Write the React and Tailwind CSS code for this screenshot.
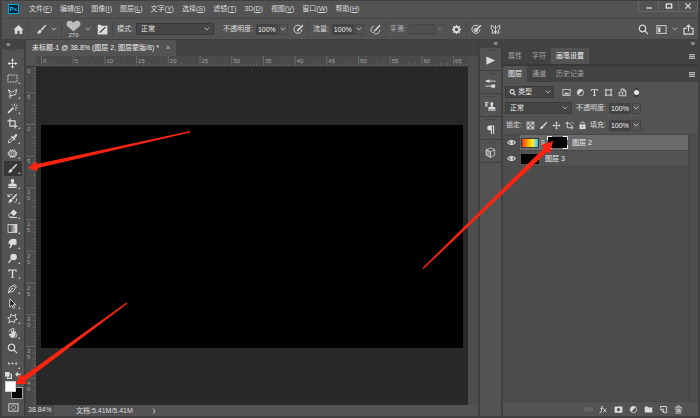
import React, { useState } from 'react';

const MENUS = [
  ['文件', 'F'],
  ['编辑', 'E'],
  ['图像', 'I'],
  ['图层', 'L'],
  ['文字', 'Y'],
  ['选择', 'S'],
  ['滤镜', 'T'],
  ['3D', 'D'],
  ['视图', 'V'],
  ['窗口', 'W'],
  ['帮助', 'H'],
];

// every icon is drawn on a 12x12 grid
const Icon = ({ children, className = 'w-[11px] h-[11px]' }) => (
  <svg
    viewBox="0 0 12 12"
    className={`${className} shrink-0`}
    fill="none"
    stroke="currentColor"
    strokeWidth="1"
    aria-hidden="true"
  >
    {children}
  </svg>
);

const solid = { fill: 'currentColor', stroke: 'none' };

const brushShape = (
  <g {...solid}>
    <path d="M10.8 1.2 L11 2 L6.6 7.2 L5 5.9 L9.9 1.2 Z" />
    <path d="M4.5 6.3 L6.1 7.7 C6 9.8 3.6 10.9 1 10.4 C2.4 9.8 2 6.6 4.5 6.3 Z" />
  </g>
);
const moveShape = (
  <g>
    <path d="M6 2 V10 M2 6 H10" />
    <path {...solid} d="M6 0.6 L7.9 3 H4.1 Z M6 11.4 L7.9 9 H4.1 Z M0.6 6 L3 4.1 V7.9 Z M11.4 6 L9 4.1 V7.9 Z" />
  </g>
);
const stampShape = (
  <path
    {...solid}
    d="M6 1 C8 1 8.4 2.8 7.5 4.2 C7 5 7 6 7.2 6.4 H10 L10.8 8.6 H1.2 L2 6.4 H4.8 C5 6 5 5 4.5 4.2 C3.6 2.8 4 1 6 1 Z M1.5 9.4 H10.5 V10.8 H1.5 Z"
  />
);
const typeShape = <path {...solid} d="M1.5 1.5 H10.5 V4 H9.6 L9 2.8 H6.8 V9.7 L8 10 V10.7 H4 V10 L5.2 9.7 V2.8 H3 L2.4 4 H1.5 Z" />;
const searchShape = <path strokeWidth="1.3" d="M5 1.3 A3.6 3.6 0 1 1 4.9 1.3 M7.7 7.7 L11 11" />;
const cropShape = <path strokeWidth="1.3" d="M3.2 0.5 V8.8 H11.5 M0.5 3.2 H8.8 V11.5" />;
const halfCircle = (
  <g>
    <circle cx="6" cy="6" r="4.2" />
    <path {...solid} d="M9 3 A4.2 4.2 0 0 0 3 9 Z" />
  </g>
);
const pressureShape = (
  <g>
    <path d="M8 2.2 A4.4 4.4 0 1 0 9.8 6" />
    <path {...solid} d="M4 8.3 L4.8 6 L10.3 0.8 L11.3 1.9 L6.2 7.4 Z" />
  </g>
);

const TOOLS = [
  ['移动工具', moveShape],
  ['矩形选框工具', <rect x="1" y="2.2" width="10" height="7.6" strokeDasharray="2 1" />],
  ['多边形套索工具', <path d="M1.2 2 L5.6 4.6 L10.5 1.6 L9.4 7.2 L4.6 8.4 L1.2 2 M4.6 8.4 C2.4 7 1.2 9.4 3 9.8 C4.4 10 4.8 8.6 3.4 11.4" />],
  ['魔棒工具', (
    <g>
      <path strokeWidth="1.8" d="M1.2 10.8 L7 5" />
      <path d="M8.2 0.6 V3 M5.4 1.6 L6.6 3 M9.2 4 L11.4 1.8 M9 5.4 H11.4 M8.4 6.4 L9.8 8" />
    </g>
  )],
  ['裁剪工具', cropShape],
  ['吸管工具', (
    <g>
      <path d="M1.2 10.8 L2 8.4 L6.2 4.2 L8 6 L3.6 10.2 Z" />
      <path {...solid} d="M5.2 3 L9.4 7 L8.4 7.8 L4.4 4 Z M7 4 L9.2 1.4 C10.6 0.6 11.8 2 10.8 3.2 L8.6 5.6 Z" />
    </g>
  )],
  ['修补工具', (
    <g>
      <rect x="2.2" y="3" width="7.6" height="6.2" rx="1.8" fill="#858585" />
      <path d="M4 1.6 V3 M6 1.6 V3 M8 1.6 V3 M4 9.2 V10.6 M6 9.2 V10.6 M8 9.2 V10.6 M0.8 5 H2 M0.8 7 H2 M10 5 H11.2 M10 7 H11.2" />
    </g>
  )],
  ['画笔工具', brushShape],
  ['仿制图章工具', stampShape],
  ['历史记录画笔工具', (
    <g>
      {brushShape}
      <path d="M1.4 3.6 C2.4 1.4 4.6 1.2 6 2.4 M1 1.4 V3.8 H3.4 M10.4 6 C10.8 8.4 9.8 9.8 8 10.6" />
    </g>
  )],
  ['橡皮擦工具', (
    <g>
      <path {...solid} d="M7 1.6 L11 4.8 L7.6 8.6 L3.6 5.4 Z" />
      <path d="M3.4 5.8 L1.2 8.2 L3.2 10 H5.8 L7.2 8.8 M3 10.4 H11" />
    </g>
  )],
  ['渐变工具', (
    <g>
      <defs>
        <linearGradient id="toolGradient">
          <stop offset="0" stopColor="#222222" />
          <stop offset="1" stopColor="#eeeeee" />
        </linearGradient>
      </defs>
      <rect x="1.2" y="1.8" width="9.6" height="8.4" fill="url(#toolGradient)" />
    </g>
  )],
  ['涂抹工具', <path {...solid} d="M2 3.6 C3.6 0.6 8.6 0.2 10.2 1.8 L10.6 6.6 L8 8 L7 7 L5.6 7.6 L4.2 11 H2.6 L3.8 7.4 L2.8 6 L1.4 6.6 Z" />],
  ['减淡工具', (
    <g>
      <circle {...solid} cx="7.2" cy="4.4" r="3.6" />
      <path strokeWidth="1.5" d="M4.8 7 L1.6 10.8" />
    </g>
  )],
  ['横排文字工具', typeShape],
  ['钢笔工具', (
    <g>
      <path d="M1.4 10.6 L3 5 L7 2.6 L9.4 5 L7 9 L1.4 10.6 L5.6 6.4 M7.4 1.2 L10.8 4.6" />
      <circle {...solid} cx="6" cy="6" r="0.9" />
    </g>
  )],
  ['路径选择工具', <path fill="#1c1c1c" d="M3 0.9 L9.6 7.4 H6.8 L8.4 10.6 L6.8 11.2 L5.4 8 L3 9.9 Z" />],
  ['自定形状工具', <path d="M4.2 1.2 L6.4 3 L9.8 1.6 L8.8 4.6 L11.2 7 L8.4 7.6 L8 10.6 L5.4 9 L2 10.8 L2.8 7.4 L0.8 5.2 L3.8 4.6 Z" />],
  ['旋转视图工具', (
    <g>
      <path {...solid} d="M3 6 L4.8 6.8 L4.4 2.8 L5.6 2.6 L6.2 5 L6.6 2 L7.8 2.2 L7.8 5.2 L8.8 3.2 L9.8 3.6 L9.2 7.6 C9 10 7.4 11 5.6 10.8 C4.2 10.6 3.2 8.4 1.8 7 Z" />
      <path d="M2 4 C2.6 1.4 6 0.2 8.4 1 M10.8 6 C11 8.4 10.2 9.8 9 10.8" />
    </g>
  )],
  ['缩放工具', searchShape],
  ['编辑工具栏', (
    <g {...solid}>
      <circle cx="2" cy="6" r="1.1" />
      <circle cx="6" cy="6" r="1.1" />
      <circle cx="10" cy="6" r="1.1" />
    </g>
  )],
];

const DOCK = [
  ['动作', <path {...solid} d="M1.5 1.5 L11 6 L1.5 10.5 Z" />],
  ['画笔设置', (
    <g>
      <path d="M0.5 3.4 H11.5 M0.5 8.8 H11.5" />
      <path {...solid} d="M1.4 2.6 L5 1.6 V5.2 L1.4 4.2 Z M7 7 H10.8 V10.6 H7 Z" />
    </g>
  )],
  ['仿制源', (
    <g>
      <path d="M0.5 1.5 H4 M0.5 3.5 H3 M0.5 5.5 H3 M1 1 V6" />
      <path {...solid} d="M7.4 1.4 C9.2 1.4 9.4 3 8.6 4.2 L8.4 6.6 H10.8 L11.6 8.6 H3.4 L4.2 6.6 H6.4 L6.2 4.2 C5.4 3 5.6 1.4 7.4 1.4 Z M3.6 9.4 H11.4 V10.6 H3.6 Z" />
    </g>
  )],
  ['段落', <path {...solid} d="M5 1.5 H10 V10.8 H8.8 V2.5 H7.6 V10.8 H6.4 V7 C3.4 7.2 2 5.6 2.4 3.8 C2.8 2.2 3.8 1.5 5 1.5 Z" />],
  ['3D', (
    <g strokeWidth="0.8">
      <path d="M6 1 L10.6 3 V8.8 L6 11.2 L1.4 8.8 V3 Z M1.4 3 L6 5.2 L10.6 3 M6 5.2 V11" />
      <path fill="#8a8a8a" d="M1.4 3 L6 5.2 V11.2 L1.4 8.8 Z" />
    </g>
  )],
];

const FILTERS = [
  ['像素图层', (
    <g>
      <rect x="1.2" y="2" width="9.6" height="8" />
      <path {...solid} d="M2.4 8.6 L5 5.6 L6.6 7.4 L7.8 6 L9.8 8.6 Z" />
    </g>
  )],
  ['调整图层', halfCircle],
  ['文字图层', typeShape],
  ['形状图层', <path d="M2.6 1 V11 M9.4 1 V11 M1 2.6 H11 M1 9.4 H11" strokeWidth="1.3" />],
  ['智能对象', <path strokeWidth="1.2" d="M4.2 4 V1.4 H8 L10.4 3.8 V10.4 H6.8 M7.6 1.6 V4.2 H10.2 M1.6 5.6 H6.2 V10.4 H1.6 Z" />],
];

const LOCKS = [
  ['锁定透明像素', (
    <g>
      <rect x="1.4" y="1.4" width="9.2" height="9.2" />
      <path {...solid} d="M2 2 H4.6 V4.6 H2 Z M7.2 2 H10 V4.6 H7.2 Z M4.6 4.6 H7.2 V7.2 H4.6 Z M2 7.2 H4.6 V10 H2 Z M7.2 7.2 H10 V10 H7.2 Z" />
    </g>
  )],
  ['锁定图像像素', brushShape],
  ['锁定位置', moveShape],
  ['防止嵌套', <path strokeWidth="1.2" d="M3 0.8 V9 H11.4 M0.8 3 H6 L9 6 V11.2 M9 1.4 L11 3.4" />],
  ['锁定全部', (
    <g>
      <path strokeWidth="1.3" d="M3.8 5 V3.4 C3.8 0.6 8.2 0.6 8.2 3.4 V5" />
      <path {...solid} d="M2 4.8 H10 V10.8 H2 Z" />
      <path stroke="#444444" d="M6 6.6 V8.8" />
    </g>
  )],
];

const FOOTER = [
  ['链接图层', <path className="text-[#858585]" stroke="currentColor" d="M5 4 H2.8 C0.2 4 0.2 8 2.8 8 H5 M7 4 H9.2 C11.8 4 11.8 8 9.2 8 H7 M4 6 H8" />],
  ['图层样式', (
    <g>
      <path d="M5.6 1.6 C3.8 0.8 3.8 3.4 3.2 6.4 C2.8 9.4 2.2 11.2 0.6 10.4 M1.6 4.4 H5.4" strokeWidth="1.2" />
      <path d="M5.8 5 C7.4 4.6 7.2 9.8 9.8 9 M10 4.8 L5.4 9.6" strokeWidth="1.2" />
    </g>
  )],
  ['添加图层蒙版', <path {...solid} fillRule="evenodd" d="M0.8 2 H11.2 V10.4 H0.8 Z M6 4 A2.2 2.2 0 1 0 6.1 4 Z" />],
  ['创建调整图层', halfCircle],
  ['创建新组', <path {...solid} d="M1 2 H5 L6 3.4 H11 V10 H1 Z" />],
  ['创建新图层', <path d="M2 4.4 V2 H10.2 V10.2 H6.6 M2 5.6 H6.2 V10.2 L2 5.6" strokeWidth="1.2" />],
  ['删除图层', <path d="M1.4 3 H10.6 M4.4 2.6 V1.2 H7.6 V2.6 M2.4 3.4 L3 11 H9 L9.6 3.4 M4.6 4.6 V9.6 M6 4.6 V9.6 M7.4 4.6 V9.6" />],
];

const Chevron = () => (
  <svg viewBox="0 0 6 4" className="w-[6px] h-[4px] shrink-0 text-[#b8b8b8]" fill="none" stroke="currentColor" aria-hidden="true">
    <path d="M0.7 0.6 L3 2.9 L5.3 0.6" />
  </svg>
);

const Divider = () => <span className="w-px h-[16px] shrink-0 bg-[#474747]" />;

const DropDown = ({ label, options, className }) => (
  <span className={`relative flex items-center h-[12px] shrink-0 bg-[#454545] border border-[#3b3b3b] ${className}`}>
    <select aria-label={label} className="w-full h-full pl-1 appearance-none bg-transparent text-[#e6e6e6] outline-none">
      {options.map((o) => (
        <option key={o}>{o}</option>
      ))}
    </select>
    <span className="absolute right-[3px] pointer-events-none">
      <Chevron />
    </span>
  </span>
);

const ValueField = ({ label, value, disabled }) => {
  const [text, setText] = useState(value);
  return (
    <label className="flex items-center gap-[3px] shrink-0">
      <span className={disabled ? 'text-[#b8b8b8]' : ''}>{label}:</span>
      <span className="flex gap-px">
        <input
          value={text}
          disabled={disabled}
          onChange={(e) => setText(e.target.value)}
          className={`h-[11px] pl-[2px] text-[#f0f0f0] outline-none ${disabled ? 'w-[26px] bg-[#4e4e4e] border border-[#474747]' : 'w-[22px] bg-[#434343]'}`}
        />
        <button
          type="button"
          aria-label={`${label}滑块`}
          disabled={disabled}
          className={`flex items-center justify-center w-[9px] h-[11px] border border-[#454545] ${disabled ? 'opacity-40' : ''}`}
        >
          <Chevron />
        </button>
      </span>
    </label>
  );
};

const IconButton = ({ label, children, className = '', size }) => (
  <button type="button" aria-label={label} className={`flex items-center justify-center shrink-0 ${className}`}>
    <Icon className={size}>{children}</Icon>
  </button>
);

const PanelMenu = () => (
  <button type="button" aria-label="面板菜单" className="ml-auto mr-[3px] flex flex-col self-center">
    <span className="w-[6px] h-[2px] border-t border-[#b0b0b0] bg-[#707070]" />
    <span className="w-[6px] h-[2px] border-t border-[#b0b0b0] bg-[#707070]" />
    <span className="w-[6px] h-px bg-[#b0b0b0]" />
  </button>
);

const PanelTabs = ({ tabs, active }) => (
  <div role="tablist" className="flex h-[16px] shrink-0 bg-[#424242]">
    {tabs.map((tab) => (
      <button
        key={tab}
        type="button"
        role="tab"
        aria-selected={tab === active}
        className={`px-[5px] ${tab === active ? 'bg-[#535353] text-[#f2f2f2]' : 'text-[#a6a6a6]'}`}
      >
        {tab}
      </button>
    ))}
    <PanelMenu />
  </div>
);

const MenuBar = () => (
  <header className="flex items-start h-[18px] shrink-0 border-b border-[#484848]">
    <span className="flex items-center justify-center w-[11px] h-[10px] mt-[3px] ml-[6px] border border-[#00a5d6] bg-[#002338] text-[6px] font-bold text-[#21b8ea]">
      Ps
    </span>
    <nav className="flex gap-[8px] mt-[2px] ml-[10px]">
      {MENUS.map(([name, key]) => (
        <button key={name} type="button" className="h-[12px]">
          {name}(<u>{key}</u>)
        </button>
      ))}
    </nav>
    <div className="ml-auto flex h-[11px] text-[#e0e0e0]">
      <button type="button" aria-label="最小化" className="flex items-center justify-center w-[20px] border-l border-b border-[#666666]">
        <Icon className="w-[8px] h-[8px]"><path strokeWidth="2" d="M2 9 H10" /></Icon>
      </button>
      <button type="button" aria-label="最大化" className="flex items-center justify-center w-[20px] border-l border-b border-[#666666]">
        <Icon className="w-[8px] h-[8px]"><rect strokeWidth="2" x="2" y="3" width="8" height="6" /></Icon>
      </button>
      <button type="button" aria-label="关闭" className="flex items-center justify-center w-[20px] border-x border-b border-[#666666]">
        <Icon className="w-[8px] h-[8px]"><path strokeWidth="1.8" d="M2 2 L10 10 M10 2 L2 10" /></Icon>
      </button>
    </div>
  </header>
);

const OptionsBar = () => (
  <div className="flex items-center gap-[4px] h-[20px] pl-[11px] pr-[4px] shrink-0">
    <IconButton label="主页">
      <path {...solid} d="M6 1 L11.4 6.2 H10 V10.8 H7.2 V7.4 H4.8 V10.8 H2 V6.2 H0.6 Z" />
    </IconButton>
    <Divider />
    <IconButton label="画笔预设" className="ml-[3px]">{brushShape}</IconButton>
    <Chevron />
    <Divider />
    <button type="button" aria-label="画笔大小" className="flex flex-col items-center">
      <svg viewBox="0 0 15 12" className="w-[15px] h-[12px] text-[#bdbdbd]" aria-hidden="true">
        <path fill="currentColor" d="M7.5 11.5 L1.4 6.2 C-0.6 4 1 0.8 3.8 0.8 C5.6 0.8 6.8 1.8 7.5 3 C8.2 1.8 9.4 0.8 11.2 0.8 C14 0.8 15.6 4 13.6 6.2 Z" />
      </svg>
      <span className="text-[6px] leading-[6px]">270</span>
    </button>
    <Chevron />
    <IconButton label="画笔设置面板" className="ml-[2px]">
      <path {...solid} d="M0.8 0.8 H4 L5 2 H11.4 V11.4 H0.8 Z" />
      <path stroke="#3a3a3a" strokeWidth="1.4" d="M3 9.4 L9.2 3.4" />
    </IconButton>
    <Divider />
    <div className="flex items-center gap-[3px]">
      <span>模式:</span>
      <DropDown label="模式" options={['正常', '溶解', '正片叠底']} className="w-[78px]" />
    </div>
    <span className="w-px" />
    <ValueField label="不透明度" value="100%" />
    <IconButton label="不透明度压力" className="ml-px">{pressureShape}</IconButton>
    <Divider />
    <ValueField label="流量" value="100%" />
    <IconButton label="喷枪" className="ml-[2px]">
      <path d="M4 2.4 C0.4 3.4 0.4 8 2.6 9.2 C5 10.4 5.6 7.4 4.4 6.2 M5 10.6 C8 11.4 10.8 9.6 10.4 6.4" />
      <path {...solid} d="M5 7.6 L5.8 5.4 L10.4 0.8 L11.4 1.8 L7 6.8 Z" />
    </IconButton>
    <Divider />
    <ValueField label="平滑" value="" disabled />
    <IconButton label="平滑选项" className="ml-[2px]">
      <circle cx="6" cy="6" r="2.8" strokeWidth="1.8" />
      <path strokeWidth="1.6" d="M6 1 V3 M6 9 V11 M1 6 H3 M9 6 H11 M2.5 2.5 L4 4 M8 8 L9.5 9.5 M9.5 2.5 L8 4 M4 8 L2.5 9.5" />
    </IconButton>
    <Divider />
    <IconButton label="大小压力">
      {pressureShape}
      <circle cx="5.4" cy="6.4" r="2" />
    </IconButton>
    <IconButton label="对称选项" className="ml-[4px]">
      <path d="M6 1.4 V11 M4.8 4.6 C3.4 1.4 1 1 1 2 L1.8 6 L3 6.6 L2 9.4 L4 10.4 L5 7.4 M7.2 4.6 C8.6 1.4 11 1 11 2 L10.2 6 L9 6.6 L10 9.4 L8 10.4 L7 7.4" />
    </IconButton>
    <div className="ml-auto flex items-center gap-[5px]">
      <IconButton label="搜索">{searchShape}</IconButton>
      <IconButton label="工作区" className="ml-[2px]">
        <rect x="1" y="1.8" width="10" height="8.4" />
        <path {...solid} d="M2.4 3.6 H4.8 V8.8 H2.4 Z" />
      </IconButton>
      <Chevron />
      <IconButton label="共享">
        <path strokeWidth="1.2" d="M3.8 4.8 H1 V11 H11 V4.8 H8.2 M6 8 V1.4 M3.8 3.4 L6 1.2 L8.2 3.4" />
      </IconButton>
    </div>
  </div>
);

const ToolBar = () => (
  <aside className="flex flex-col w-[24px] shrink-0 bg-[#535353] border-r-2 border-[#404040]">
    <button type="button" aria-label="折叠工具栏" className="h-[9px] shrink-0 pl-[4px] bg-[#424242] text-left text-[8px] leading-[6px] text-[#d0d0d0]">
      »
    </button>
    <div className="h-[7px] shrink-0 mx-[5px] border-t-2 border-dotted border-[#464646]" />
    {TOOLS.map(([label, shape], i) => (
      <button
        key={label}
        type="button"
        aria-label={label}
        className={`flex items-center justify-center h-[15px] mx-[2px] shrink-0 ${label === '画笔工具' ? 'bg-[#363636]' : ''}`}
      >
        <Icon>{shape}</Icon>
        {i > 0 && i !== 19 ? (
          <svg viewBox="0 0 2 2" className="w-[2px] h-[2px] mb-[2px] self-end shrink-0" aria-hidden="true">
            <path d="M2 0 V2 H0 Z" fill="#cccccc" />
          </svg>
        ) : (
          <span className="w-[2px] shrink-0" />
        )}
      </button>
    ))}
    <div className="flex gap-[3px] mx-[3px] mt-px">
      <IconButton label="默认颜色" size="w-[7px] h-[7px]">
        <path {...solid} d="M0 0 H8 V8 H0 Z" />
        <path strokeWidth="2" d="M9 4 H11 V11 H4 V9" />
      </IconButton>
      <IconButton label="切换颜色" size="w-[7px] h-[7px]">
        <path strokeWidth="2" d="M2 4 H9 V11 M5 0.6 L1.6 4 L5 7.4" />
      </IconButton>
    </div>
    <div className="grid grid-cols-[repeat(3,6px)] grid-rows-[repeat(3,6px)] mx-[3px] mt-[2px] shrink-0">
      <button type="button" aria-label="背景色" className="col-start-2 col-span-2 row-start-2 row-span-2 bg-black border border-[#a0a0a0]" />
      <button type="button" aria-label="前景色" className="col-start-1 col-span-2 row-start-1 row-span-2 mr-px mb-px bg-white border border-[#d0d0d0]" />
    </div>
    <IconButton label="快速蒙版" className="mt-[3px]">
      <rect x="1" y="2" width="10" height="8" />
      <circle cx="6" cy="6" r="2.2" strokeDasharray="1.2 0.6" />
    </IconButton>
  </aside>
);

const UNIT = 31.7;

const TopRuler = () => (
  <svg className="flex-1 h-[10px] min-w-0" aria-hidden="true">
    <defs>
      <pattern id="ticksX" x="5" width={UNIT} height="10" patternUnits="userSpaceOnUse">
        <path
          stroke="#707070"
          strokeWidth="0.8"
          fill="none"
          d="M0.5 0 V10 M6.8 7 V10 M13.1 7 V10 M19.4 7 V10 M25.7 7 V10 M3.6 8.5 V10 M9.9 8.5 V10 M16.2 8.5 V10 M22.5 8.5 V10 M28.8 8.5 V10"
        />
      </pattern>
    </defs>
    <rect width="100%" height="10" fill="url(#ticksX)" />
    {Array.from({ length: 14 }, (_, i) => (
      <text key={i} x={7 + i * UNIT} y="7" fontSize="6" fill="#a4a4a4">
        {i * 5}
      </text>
    ))}
  </svg>
);

// labels run down the ruler one digit at a time; the origin is 57px below the top
const SideRuler = () => (
  <svg className="w-[10px] flex-1 min-h-0" aria-hidden="true">
    <defs>
      <pattern id="ticksY" y="57" width="10" height={UNIT} patternUnits="userSpaceOnUse">
        <path
          stroke="#707070"
          strokeWidth="0.8"
          fill="none"
          d="M0 0.5 H10 M7 6.8 H10 M7 13.1 H10 M7 19.4 H10 M7 25.7 H10 M8.5 3.6 H10 M8.5 9.9 H10 M8.5 16.2 H10 M8.5 22.5 H10 M8.5 28.8 H10"
        />
      </pattern>
    </defs>
    <rect width="10" height="100%" fill="url(#ticksY)" />
    {[-5, 0, 5, 10, 15, 20, 25, 30, 35, 40].map((n) =>
      String(Math.abs(n)).split('').map((digit, j) => (
        <text key={`${n}-${j}`} x="1" y={64 + (n / 5) * UNIT + j * 6} fontSize="6" fill="#a4a4a4">
          {digit}
        </text>
      ))
    )}
    <text x="1" y="6" fontSize="6" fill="#a4a4a4">0</text>
  </svg>
);

const DocumentArea = () => (
  <main className="flex flex-col flex-1 min-w-0 bg-[#424242]">
    <div role="tablist" className="flex h-[16px] shrink-0">
      <div className="flex items-center gap-[7px] px-[6px] bg-[#535353]">
        <button type="button" role="tab" aria-selected="true" className="text-[#f0f0f0]">
          未标题-1 @ 38.8% (图层 2, 图层蒙版/8) *
        </button>
        <button type="button" aria-label="关闭文档" className="text-[#c0c0c0]">×</button>
      </div>
    </div>
    <div className="flex flex-1 min-h-0">
      <div className="flex flex-col flex-1 min-w-0 bg-[#4a4a4a]">
        <div className="flex h-[11px] shrink-0 border-b border-[#333333]">
          <span className="w-[10px] shrink-0 bg-[#535353]" />
          <TopRuler />
        </div>
        <div className="flex flex-1 min-h-0">
          <div className="flex flex-col w-[10px] shrink-0">
            <SideRuler />
          </div>
          <div className="flex flex-1 min-w-0 pt-[58px] pb-[57px] px-[5px] bg-[#282828]">
            <div className="flex-1 bg-black" />
          </div>
        </div>
      </div>
      <div className="w-[10px] shrink-0 bg-[#4d4d4d]" />
    </div>
    <footer className="flex items-center h-[11px] shrink-0 bg-[#535353] text-[#dedede]">
      <span className="w-[28px] h-full pl-[2px] bg-[#4a4a4a]">38.84%</span>
      <span className="ml-[22px]">文档:5.41M/5.41M</span>
      <button type="button" aria-label="状态选项" className="ml-[18px]">
        <Icon className="w-[6px] h-[8px]"><path strokeWidth="1.6" d="M4 1 L8 6 L4 11" /></Icon>
      </button>
    </footer>
  </main>
);

const IconDock = () => (
  <aside className="flex flex-col w-[25px] shrink-0 border-x-2 border-[#404040] bg-[#535353]">
    <button type="button" aria-label="展开面板" className="h-[8px] shrink-0 pr-[3px] bg-[#424242] text-right text-[8px] leading-[6px] text-[#d0d0d0]">
      «
    </button>
    {DOCK.map(([label, shape]) => (
      <div key={label} className="flex flex-col items-center h-[23px] shrink-0 border-b border-[#404040]">
        <span className="w-[11px] h-px mt-[2px] mb-[4px] bg-[#464646]" />
        <IconButton label={label}>{shape}</IconButton>
      </div>
    ))}
  </aside>
);

const LayerRow = ({ name, selected, children }) => (
  <li className="flex h-[16px]">
    <button type="button" aria-label={`${name}可见性`} className="flex items-center justify-center w-[17px] shrink-0 border-b border-[#484848]">
      <Icon className="w-[9px] h-[9px]">
        <path strokeWidth="1.4" d="M1 6 C3 2.4 9 2.4 11 6 C9 9.6 3 9.6 1 6 Z" />
        <circle {...solid} cx="6" cy="6" r="1.9" />
      </Icon>
    </button>
    <div className={`flex items-center flex-1 pl-px border-b border-[#484848] ${selected ? 'bg-[#6a6a6a]' : 'bg-[#535353]'}`}>
      {children}
      <span className="text-[#eeeeee]">{name}</span>
    </div>
  </li>
);

const LayersPanel = () => (
  <aside className="flex flex-col w-[195px] shrink-0 bg-[#535353]">
    <button type="button" aria-label="折叠面板" className="h-[8px] shrink-0 pr-[3px] bg-[#424242] text-right text-[8px] leading-[6px] text-[#d0d0d0]">
      »
    </button>
    <PanelTabs tabs={['属性', '字符', '画笔设置']} active="画笔设置" />
    <div className="h-[2px] shrink-0 bg-[#383838]" />
    <PanelTabs tabs={['图层', '通道', '历史记录']} active="图层" />

    <div className="flex items-center gap-[3px] mt-[4px] pl-[2px] h-[12px] shrink-0">
      <div className="flex items-center w-[49px] h-[12px] pl-[3px] bg-[#454545] border border-[#3b3b3b]">
        <Icon className="w-[7px] h-[7px]"><path strokeWidth="2" d="M5.5 1.2 A3.4 3.4 0 1 1 5.4 1.2 M8 7.6 L11 11" /></Icon>
        <select aria-label="过滤类型" className="flex-1 min-w-0 pl-[2px] appearance-none bg-transparent text-[#e6e6e6] outline-none">
          <option>类型</option>
          <option>名称</option>
        </select>
        <span className="pr-[2px]"><Chevron /></span>
      </div>
      <div className="flex gap-[5px] ml-[5px]">
        {FILTERS.map(([label, shape]) => (
          <IconButton key={label} label={label} size="w-[9px] h-[9px]">{shape}</IconButton>
        ))}
        <button type="button" aria-label="过滤开关" className="w-[5px] h-[9px] ml-[2px] rounded-full bg-[#3a3a3a]">
          <span className="block w-[5px] h-[5px] rounded-full bg-[#e8e8e8]" />
        </button>
      </div>
    </div>

    <div className="flex items-center gap-[4px] mt-[4px] pl-[2px] h-[12px] shrink-0">
      <DropDown label="混合模式" options={['正常', '溶解', '正片叠底']} className="w-[67px]" />
      <ValueField label="不透明度" value="100%" />
    </div>

    <div className="flex items-center mt-[5px] pl-[3px] h-[12px] shrink-0">
      <span>锁定:</span>
      <div className="flex gap-[4px] ml-[4px] mr-[3px]">
        {LOCKS.map(([label, shape]) => (
          <IconButton key={label} label={label} size="w-[9px] h-[9px]">{shape}</IconButton>
        ))}
      </div>
      <ValueField label="填充" value="100%" />
    </div>

    <div className="flex flex-1 min-h-0 mt-[3px] border-t border-[#484848] bg-[#4d4d4d]">
      <ul className="flex-1">
        <LayerRow name="图层 2" selected>
          <span className="w-[18px] h-[10px] bg-linear-to-r from-[#f8260a] via-[#fff100] via-65% to-[#28b0e8] border border-[#3a3a3a]" />
          <span className="flex justify-center w-[8px] text-[#dddddd]">
            <Icon className="w-[6px] h-[10px]">
              <path strokeWidth="1.6" d="M3.5 5 V2.8 C3.5 0 8.5 0 8.5 2.8 V5 M3.5 7 V9.2 C3.5 12 8.5 12 8.5 9.2 V7 M6 4 V8" />
            </Icon>
          </span>
          <svg viewBox="0 0 21 13" className="w-[21px] h-[13px] mr-[4px] shrink-0" aria-hidden="true">
            <rect x="1" y="1" width="19" height="11" fill="#000000" />
            <path fill="none" stroke="#f4f4f4" d="M0.5 4 V0.5 H5 M16 0.5 H20.5 V4 M20.5 9 V12.5 H16 M5 12.5 H0.5 V9" />
          </svg>
        </LayerRow>
        <LayerRow name="图层 3">
          <span className="w-[18px] h-[10px] mr-[6px] bg-black" />
        </LayerRow>
      </ul>
      <div className="w-[10px] shrink-0 border-l border-[#464646]" />
    </div>

    <footer className="flex items-center justify-end gap-[6px] h-[15px] pr-[15px] shrink-0 border-t border-[#464646]">
      {FOOTER.map(([label, shape]) => (
        <IconButton key={label} label={label} size="w-[9px] h-[9px]">{shape}</IconButton>
      ))}
    </footer>
  </aside>
);

// red pointers laid over the workspace, inside the window border
const Pointers = () => (
  <svg viewBox="2 1 696 415" preserveAspectRatio="xMinYMin meet" className="absolute inset-0 w-full h-full pointer-events-none" aria-hidden="true">
    <g fill="#fb2411">
      <path d="M28 168 L36 161 L37 164 L190 131 L190 132.5 L38 168 L37 171 Z" />
      <path d="M16 384 L20 374 L22 377 L126.5 302.5 L127.5 303.5 L25 381 L27 384 Z" />
      <path d="M553 141 L541 145 L544 148 L422.5 268 L423.5 269 L547.5 151.5 L550 154 Z" />
    </g>
  </svg>
);

const App = () => (
  <div className="relative flex flex-col min-h-screen border-2 border-t-1 border-[#404040] bg-[#535353] font-['Liberation_Sans','Noto_Sans_CJK_SC',sans-serif] text-[7px] leading-[10px] text-[#dcdcdc] whitespace-nowrap overflow-hidden">
    <MenuBar />
    <OptionsBar />
    <div className="flex flex-1 border-t border-[#404040]">
      <ToolBar />
      <DocumentArea />
      <IconDock />
      <LayersPanel />
    </div>
    <Pointers />
  </div>
);

export default App;
